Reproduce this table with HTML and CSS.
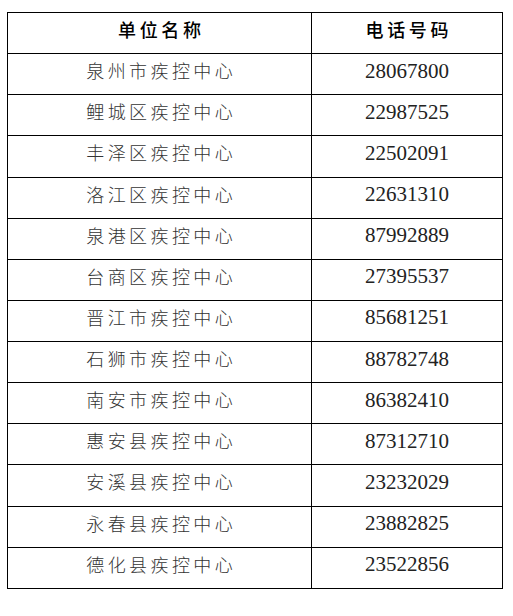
FILE: index.html
```html
<!DOCTYPE html>
<html lang="zh-CN">
<head>
<meta charset="utf-8">
<title>疾控中心电话</title>
<link rel="stylesheet" href="styles.css">
</head>
<body>
<div class="table">
  <div class="cell head name">单位名称</div><div class="cell head">电话号码</div>
  <div class="cell name">泉州市疾控中心</div><div class="cell num">28067800</div>
  <div class="cell name">鲤城区疾控中心</div><div class="cell num">22987525</div>
  <div class="cell name">丰泽区疾控中心</div><div class="cell num">22502091</div>
  <div class="cell name">洛江区疾控中心</div><div class="cell num">22631310</div>
  <div class="cell name">泉港区疾控中心</div><div class="cell num">87992889</div>
  <div class="cell name">台商区疾控中心</div><div class="cell num">27395537</div>
  <div class="cell name">晋江市疾控中心</div><div class="cell num">85681251</div>
  <div class="cell name">石狮市疾控中心</div><div class="cell num">88782748</div>
  <div class="cell name">南安市疾控中心</div><div class="cell num">86382410</div>
  <div class="cell name">惠安县疾控中心</div><div class="cell num">87312710</div>
  <div class="cell name">安溪县疾控中心</div><div class="cell num">23232029</div>
  <div class="cell name">永春县疾控中心</div><div class="cell num">23882825</div>
  <div class="cell name">德化县疾控中心</div><div class="cell num">23522856</div>
</div>
</body>
</html>
```
FILE: styles.css
```css
html, body {
  margin: 0;
  background: #fff;
}
body {
  padding: 12px 0 0 7px;
}
.table {
  display: grid;
  grid-template-columns: 303px 190px;
  grid-auto-rows: 40.14px;
  gap: 1px;
  padding: 1px;
  background: #000;
  width: max-content;
}
.cell {
  background: #fff;
  display: flex;
  align-items: center;
  justify-content: center;
  padding-bottom: 8px;
  box-sizing: border-box;
}
.name {
  font-family: "Noto Sans CJK SC", sans-serif;
  font-size: 18px;
  font-weight: 300;
  letter-spacing: 3.4px;
  padding-left: 3.4px;
  color: #333;
}
.head {
  font-family: "Noto Sans CJK SC", sans-serif;
  font-size: 18px;
  font-weight: 500;
  letter-spacing: 3.6px;
  padding-left: 3.6px;
  color: #000;
}
.num {
  font-family: "Liberation Serif", serif;
  font-size: 21px;
  color: #222;
  padding-bottom: 6px;
}
```
